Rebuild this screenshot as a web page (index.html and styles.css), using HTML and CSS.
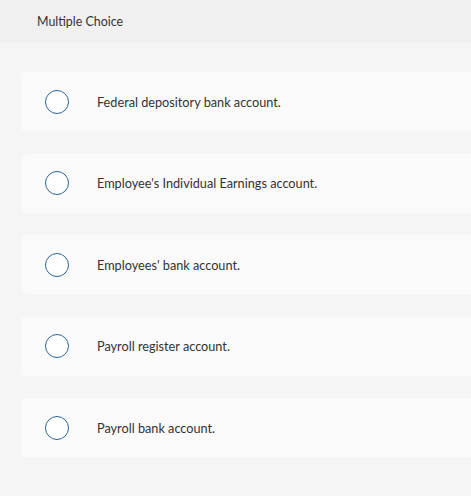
FILE: index.html
```html
<!DOCTYPE html>
<html>
<head>
<meta charset="utf-8">
<link rel="stylesheet" href="styles.css">
</head>
<body>
<div class="header">Multiple Choice</div>
<div class="choices">
  <div class="choice"><span class="radio"></span><span class="label">Federal depository bank account.</span></div>
  <div class="choice"><span class="radio"></span><span class="label">Employee's Individual Earnings account.</span></div>
  <div class="choice"><span class="radio"></span><span class="label">Employees' bank account.</span></div>
  <div class="choice"><span class="radio"></span><span class="label">Payroll register account.</span></div>
  <div class="choice"><span class="radio"></span><span class="label">Payroll bank account.</span></div>
</div>
</body>
</html>
```
FILE: styles.css
```css
html, body {
  margin: 0;
  padding: 0;
  background: #f5f5f5;
  font-family: Lato, "Open Sans", sans-serif;
  color: #333;
}
.header {
  height: 43px;
  background: #f0f0f0;
  box-sizing: border-box;
  padding-left: 37px;
  padding-bottom: 1px;
  display: flex;
  align-items: center;
  font-size: 12.4px;
  color: #333;
}
.choices {
  display: flex;
  flex-direction: column;
  gap: 22.5px;
  padding-top: 29px;
  padding-left: 22px;
}
.choice {
  height: 59px;
  background: #fafafa;
  border-radius: 3px 0 0 3px;
  display: flex;
  align-items: center;
  padding-left: 23px;
}
.radio {
  width: 22px;
  height: 22px;
  border: 1.5px solid #2b6396;
  border-radius: 50%;
  background: #fff;
  flex: none;
}
.label {
  margin-left: 28px;
  font-size: 12.7px;
  color: #333;
}
```
